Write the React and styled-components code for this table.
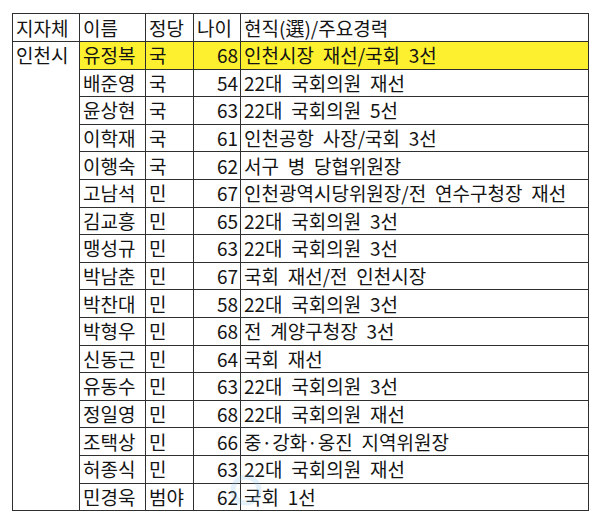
import React from "react";
import styled, { createGlobalStyle } from "styled-components";

const Global = createGlobalStyle`
  html, body { margin: 0; padding: 0; background: #ffffff; }
  body { font-family: "Noto Sans CJK KR", "Noto Sans", sans-serif; color: #141414; }
`;

const Page = styled.div`
  position: relative;
  width: 600px;
  height: 526px;
  padding: 13px 0 0 12px;
  box-sizing: border-box;
  overflow: hidden;
`;

const Table = styled.table`
  border-collapse: collapse;
  table-layout: fixed;
  width: 577px;
  border: 1.5px solid #2b2b2b;
  font-size: 19px;
  letter-spacing: 0;
  word-spacing: 4.5px;
`;

const Row = styled.tr`
  height: ${(p) => (p.$head ? 28 : 27.6)}px;
`;

const Cell = styled.td`
  border: 1px solid #2f2f2f;
  padding: 0 ${(p) => (p.$right ? "2px" : "0")} 0 ${(p) => (p.$right ? "0" : "3px")};
  text-align: ${(p) => (p.$right ? "right" : "left")};
  vertical-align: ${(p) => (p.$top ? "top" : "middle")};
  background: ${(p) => (p.$hl ? "#fdf02e" : "transparent")};
  white-space: nowrap;
  overflow: hidden;
  line-height: 26px;
`;

const HeadCell = styled.th`
  border: 1px solid #2f2f2f;
  padding: 0 0 0 3px;
  text-align: left;
  font-weight: 400;
  white-space: nowrap;
  line-height: 26px;
`;

const Watermark = styled.svg`
  position: absolute;
  left: 226px;
  top: 470px;
  width: 40px;
  height: 40px;
  pointer-events: none;
`;

const rows = [
  ["유정복", "국", 68, "인천시장 재선/국회 3선", true],
  ["배준영", "국", 54, "22대 국회의원 재선"],
  ["윤상현", "국", 63, "22대 국회의원 5선"],
  ["이학재", "국", 61, "인천공항 사장/국회 3선"],
  ["이행숙", "국", 62, "서구 병 당협위원장"],
  ["고남석", "민", 67, "인천광역시당위원장/전 연수구청장 재선"],
  ["김교흥", "민", 65, "22대 국회의원 3선"],
  ["맹성규", "민", 63, "22대 국회의원 3선"],
  ["박남춘", "민", 67, "국회 재선/전 인천시장"],
  ["박찬대", "민", 58, "22대 국회의원 3선"],
  ["박형우", "민", 68, "전 계양구청장 3선"],
  ["신동근", "민", 64, "국회 재선"],
  ["유동수", "민", 63, "22대 국회의원 3선"],
  ["정일영", "민", 68, "22대 국회의원 재선"],
  ["조택상", "민", 66, "중·강화·옹진 지역위원장"],
  ["허종식", "민", 63, "22대 국회의원 재선"],
  ["민경욱", "범야", 62, "국회 1선"],
];

export default function App() {
  return (
    <Page>
      <Global />
      <Table>
        <colgroup>
          <col style={{ width: 67 }} />
          <col style={{ width: 66 }} />
          <col style={{ width: 48 }} />
          <col style={{ width: 47 }} />
          <col />
        </colgroup>
        <thead>
          <Row $head>
            <HeadCell>지자체</HeadCell>
            <HeadCell>이름</HeadCell>
            <HeadCell>정당</HeadCell>
            <HeadCell>나이</HeadCell>
            <HeadCell>현직(選)/주요경력</HeadCell>
          </Row>
        </thead>
        <tbody>
          {rows.map(([name, party, age, career, hl], i) => (
            <Row key={name}>
              {i === 0 && (
                <Cell $top rowSpan={rows.length}>
                  인천시
                </Cell>
              )}
              <Cell $hl={hl}>{name}</Cell>
              <Cell $hl={hl}>{party}</Cell>
              <Cell $hl={hl} $right>
                {age}
              </Cell>
              <Cell $hl={hl}>{career}</Cell>
            </Row>
          ))}
        </tbody>
      </Table>
      <Watermark viewBox="0 0 40 40">
        <circle cx="20" cy="20" r="13" fill="none" stroke="rgba(130,185,230,0.22)" strokeWidth="5" />
      </Watermark>
    </Page>
  );
}
